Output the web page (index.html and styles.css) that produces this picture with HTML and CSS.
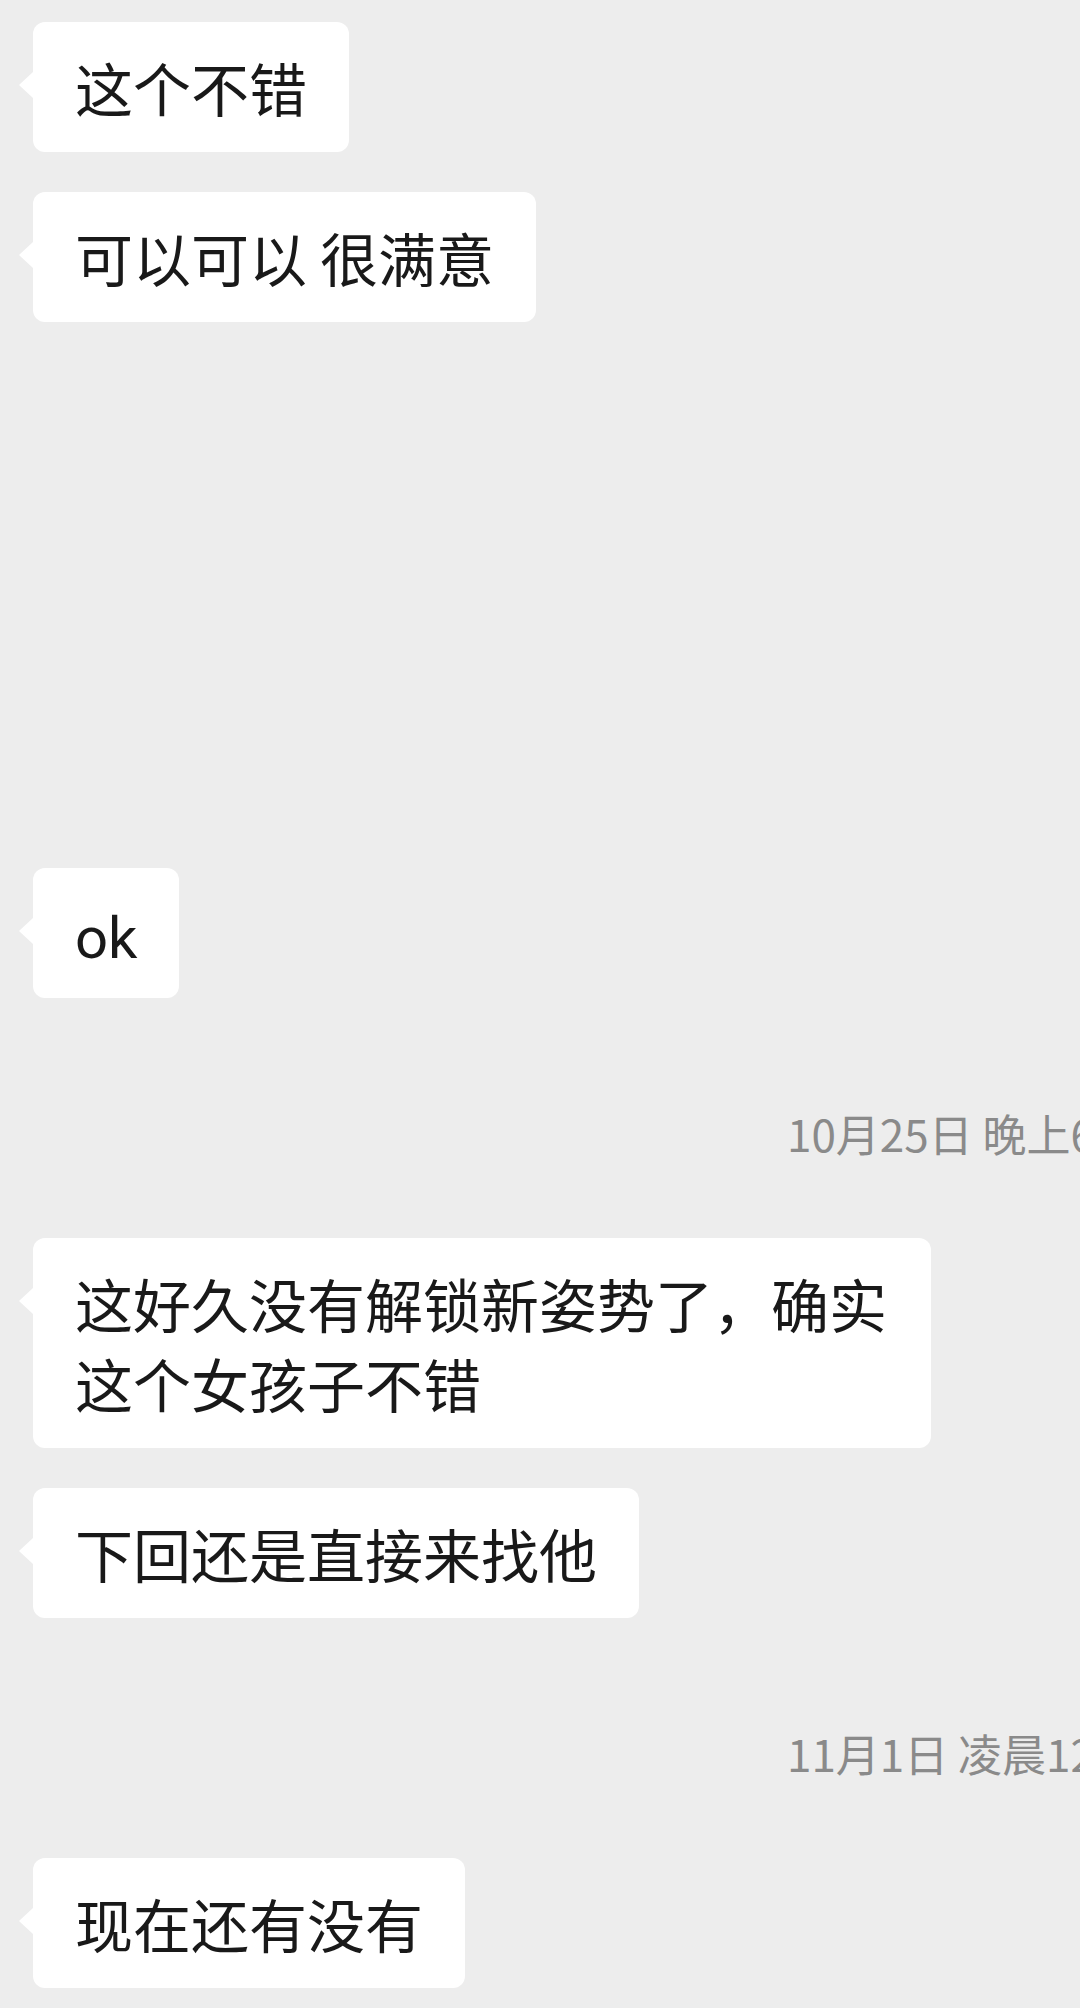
FILE: index.html
```html
<!DOCTYPE html>
<html lang="zh-CN">

<head>
    <meta charset="UTF-8">
    <meta name="viewport" content="width=device-width, initial-scale=1.0">
    <title>聊天记录</title>
    <link rel="stylesheet" href="styles.css">
</head>

<body>
    <div class="chat">
        <div class="bubble">这个不错</div>
        <div class="bubble">可以可以 很满意</div>

        <!-- 图片没加载出来，留空 -->
        <div class="bubble after-gap"><span class="latin">ok</span></div>

        <div class="time">10月25日 晚上6</div>

        <div class="bubble">这好久没有解锁新姿势了，确实这个女孩子不错</div>
        <div class="bubble">下回还是直接来找他</div>

        <div class="time">11月1日 凌晨12</div>

        <div class="bubble">现在还有没有</div>
    </div>
</body>

</html>
```

FILE: styles.css
```css
html,
body {
    margin: 0;
    padding: 0;
}

body {
    width: 1080px;
    height: 2008px;
    overflow: hidden;
    background-color: #ededed;
    font-family: "Noto Sans CJK SC", "Noto Sans", sans-serif;
    color: #191919;
}

.chat {
    display: flex;
    flex-direction: column;
    align-items: flex-start;
    padding: 22px 0 0 33px;
}

.bubble {
    position: relative;
    max-width: 814px;
    padding: 25px 42px;
    background-color: #fff;
    border-radius: 12px;
    font-size: 58px;
    line-height: 80px;
}

/*小尖角 */
.bubble::before {
    content: "";
    position: absolute;
    left: -14px;
    top: 50px;
    border-top: 13px solid transparent;
    border-bottom: 13px solid transparent;
    border-right: 14px solid #fff;
}

.bubble + .bubble {
    margin-top: 40px;
}

.bubble.after-gap {
    margin-top: 546px;
}

.latin {
    font-family: Roboto, sans-serif;
    line-height: 1;
}

.time {
    align-self: stretch;
    margin: 110px 0 80px;
    padding-left: 754px;
    height: 50px;
    line-height: 50px;
    font-size: 44px;
    color: #8a8a8a;
    white-space: nowrap;
    overflow: hidden;
}
```
